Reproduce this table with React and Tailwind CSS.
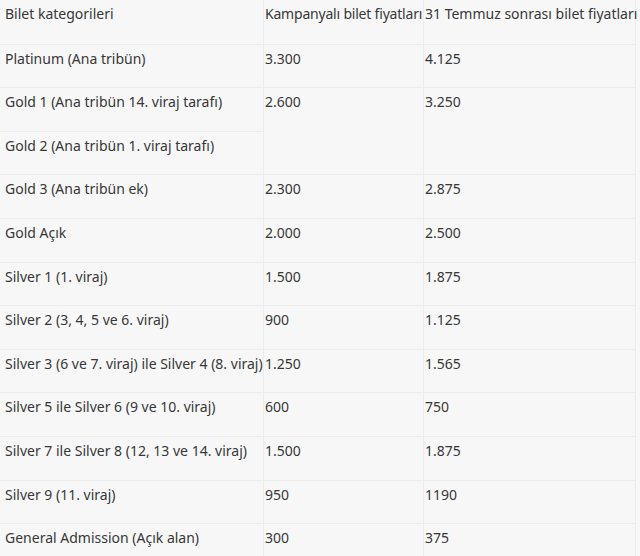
import React from 'react';

const rows = [
  ['Platinum (Ana tribün)', '3.300', '4.125'],
  ['Gold 1 (Ana tribün 14. viraj tarafı)', '2.600', '3.250'],
  ['Gold 2 (Ana tribün 1. viraj tarafı)', '', '', true],
  ['Gold 3 (Ana tribün ek)', '2.300', '2.875'],
  ['Gold Açık', '2.000', '2.500'],
  ['Silver 1 (1. viraj)', '1.500', '1.875'],
  ['Silver 2 (3, 4, 5 ve 6. viraj)', '900', '1.125'],
  ['Silver 3 (6 ve 7. viraj) ile Silver 4 (8. viraj)', '1.250', '1.565'],
  ['Silver 5 ile Silver 6 (9 ve 10. viraj)', '600', '750'],
  ['Silver 7 ile Silver 8 (12, 13 ve 14. viraj)', '1.500', '1.875'],
  ['Silver 9 (11. viraj)', '950', '1190'],
  ['General Admission (Açık alan)', '300', '375'],
];

function Row({ cells, header, merged }) {
  const line = header ? '' : 'border-t border-[#ececec]';
  const priceLine = merged ? '' : line;
  return (
    <div className="flex h-[43.6px] shrink-0">
      <div className={`w-[264px] shrink-0 pl-[5px] pt-[4px] whitespace-nowrap border-r border-[#ececec] ${line}`}>
        {cells[0]}
      </div>
      <div className={`w-[160px] shrink-0 pl-[1px] pt-[4px] whitespace-nowrap border-r border-[#ececec] ${priceLine} ${header ? 'tracking-[-0.2px]' : ''}`}>
        {cells[1]}
      </div>
      <div className={`w-[212px] shrink-0 pl-[1px] pt-[4px] whitespace-nowrap border-r border-[#ececec] ${priceLine}`}>
        {cells[2]}
      </div>
    </div>
  );
}

export default function App() {
  return (
    <div
      className="w-[640px] h-[556px] overflow-hidden bg-[#f7f7f7] text-[#383838] text-[14px] leading-[19px] flex flex-col"
      style={{ fontFamily: '"Noto Sans", "Open Sans", sans-serif' }}
    >
      <Row header cells={['Bilet kategorileri', 'Kampanyalı bilet fiyatları', '31 Temmuz sonrası bilet fiyatları']} />
      {rows.map((r, i) => (
        <Row key={i} cells={r} merged={r[3]} />
      ))}
    </div>
  );
}
